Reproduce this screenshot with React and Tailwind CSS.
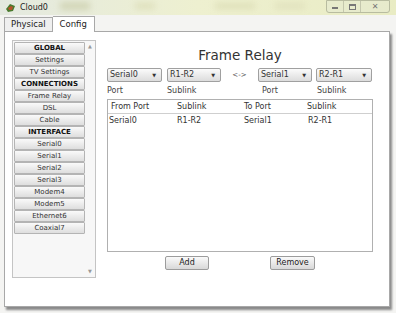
import React from "react";

const font = { fontFamily: "Tahoma, 'DejaVu Sans', Verdana, sans-serif" };

const menu = [
  { label: "GLOBAL", head: true },
  { label: "Settings" },
  { label: "TV Settings" },
  { label: "CONNECTIONS", head: true },
  { label: "Frame Relay" },
  { label: "DSL" },
  { label: "Cable" },
  { label: "INTERFACE", head: true },
  { label: "Serial0" },
  { label: "Serial1" },
  { label: "Serial2" },
  { label: "Serial3" },
  { label: "Modem4" },
  { label: "Modem5" },
  { label: "Ethernet6" },
  { label: "Coaxial7" },
];

function Select({ value, width }) {
  return (
    <div
      className={`h-[14px] ${width} flex items-center justify-between pl-[2px] pr-[5px] border border-[#a0a0a0] rounded-[2px] bg-gradient-to-b from-[#fbfbfb] to-[#dcdcdc] text-[8px] text-[#333]`}
    >
      <span>{value}</span>
      <span className="text-[5px] leading-none">▼</span>
    </div>
  );
}

function CloudIcon() {
  return (
    <svg width="11" height="10" viewBox="0 0 11 10">
      <path d="M1 6 L5 1 L10 3 L8 8 L3 9 Z" fill="#4a7a2e" />
      <path d="M3 5 L6 3 L8 4 L7 7 L4 7 Z" fill="#b5542a" />
    </svg>
  );
}

export default function App() {
  return (
    <div className="w-[396px] h-[313px] bg-[#f4f4f2] flex flex-col overflow-hidden relative" style={font}>
      {/* title bar (aero glass) */}
      <div className="h-[15px] flex items-center bg-gradient-to-r from-[#e4e9e0] via-[#eef0d0] to-[#e9ecc4] relative shrink-0">
        <div className="absolute left-[60px] top-[2px] w-[30px] h-[8px] bg-[#c9cca8] blur-[3px] opacity-70" />
        <div className="absolute left-[135px] top-[3px] w-[20px] h-[6px] bg-[#d8d9b0] blur-[3px] opacity-70" />
        <div className="absolute left-[215px] top-[3px] w-[40px] h-[6px] bg-[#d8d9b0] blur-[3px] opacity-70" />
        <div className="absolute left-[275px] top-[3px] w-[30px] h-[6px] bg-[#dcdcb8] blur-[3px] opacity-70" />
        <div className="pl-[5px] pr-[4px] flex items-center relative">
          <CloudIcon />
        </div>
        <span className="text-[8px] text-[#222] relative">Cloud0</span>
        <div className="ml-auto mr-[6px] flex h-[13px] self-start border border-[#b8bca0] rounded-b-[3px] relative bg-[#e6e9cf]/70">
          <div className="w-[17px] flex items-center justify-center border-r border-[#c4c7ad]">
            <div className="w-[6px] h-[2px] bg-[#777] mt-[2px]" />
          </div>
          <div className="w-[17px] flex items-center justify-center border-r border-[#c4c7ad]">
            <div className="w-[7px] h-[6px] border border-[#777] border-t-2" />
          </div>
          <div className="w-[28px] flex items-center justify-center text-[8px] text-[#777]">✕</div>
        </div>
      </div>

      {/* tabs */}
      <div className="h-[16px] pl-[4px] flex items-end shrink-0">
        <div className="h-[14px] px-[6px] flex items-center border border-[#a8a8a8] border-b-0 bg-[#efefef] text-[8.5px] text-[#222]">
          Physical
        </div>
        <div className="h-[16px] px-[7px] flex items-center border border-[#a8a8a8] border-b-0 border-l-0 bg-white text-[8.5px] text-[#222] relative top-[1px]">
          Config
        </div>
      </div>

      {/* panel */}
      <div className="ml-[4px] mr-[6px] h-[276px] border border-[#a8a8a8] bg-white flex shrink-0 shadow-[2px_3px_2px_#8a8a8a]">
        {/* left list */}
        <div className="ml-[7px] mt-[8px] w-[84px] h-[238px] border border-[#c4c4c4] bg-[#f7f7f7] flex">
          <div className="flex-1 flex flex-col pl-[1px] pt-[1px]">
            {menu.map((m) => (
              <div
                key={m.label}
                className={`h-[12px] flex items-center justify-center border border-[#b4b4b4] rounded-[1px] bg-gradient-to-b from-[#fafafa] to-[#dedede] text-[7px] leading-none ${
                  m.head ? "font-bold text-[#111]" : "text-[#333]"
                }`}
              >
                {m.label}
              </div>
            ))}
          </div>
          <div className="w-[10px] flex flex-col justify-between items-center py-[2px] text-[5px] text-[#999]">
            <span>▲</span>
            <span>▼</span>
          </div>
        </div>

        {/* right area */}
        <div className="ml-[11px] w-[266px] flex flex-col">
          <div className="mt-[14px] h-[18px] leading-[18px] text-center text-[13.5px] text-[#333]">Frame Relay</div>
          <div className="mt-[4px] flex items-center">
            <Select value="Serial0" width="w-[55px]" />
            <div className="w-[5px]" />
            <Select value="R1-R2" width="w-[54px]" />
            <div className="w-[37px] text-center text-[7px] text-[#555]">&lt;-&gt;</div>
            <Select value="Serial1" width="w-[54px]" />
            <div className="w-[4px]" />
            <Select value="R2-R1" width="w-[56px]" />
          </div>
          <div className="mt-[3px] h-[10px] flex text-[8px] text-[#444]">
            <span className="w-[60px]">Port</span>
            <span className="w-[95px]">Sublink</span>
            <span className="w-[55px]">Port</span>
            <span>Sublink</span>
          </div>
          <div className="mt-[4px] h-[153px] border border-[#b0b0b0] flex flex-col text-[8px] text-[#333]">
            <div className="h-[14px] flex items-center border-b border-[#cfcfcf] pl-[3px]">
              <span className="w-[66px]">From Port</span>
              <span className="w-[67px]">Sublink</span>
              <span className="w-[63px]">To Port</span>
              <span>Sublink</span>
            </div>
            <div className="h-[13px] flex items-center pl-[1px]">
              <span className="w-[68px]">Serial0</span>
              <span className="w-[67px]">R1-R2</span>
              <span className="w-[64px]">Serial1</span>
              <span>R2-R1</span>
            </div>
          </div>
          <div className="mt-[4px] flex">
            <div className="ml-[58px] w-[44px] h-[14px] flex items-center justify-center border border-[#9c9c9c] rounded-[2px] bg-gradient-to-b from-[#fafafa] to-[#d8d8d8] text-[8px] text-[#222]">
              Add
            </div>
            <div className="ml-[61px] w-[45px] h-[14px] flex items-center justify-center border border-[#9c9c9c] rounded-[2px] bg-gradient-to-b from-[#fafafa] to-[#d8d8d8] text-[8px] text-[#222]">
              Remove
            </div>
          </div>
        </div>
      </div>
    </div>
  );
}
